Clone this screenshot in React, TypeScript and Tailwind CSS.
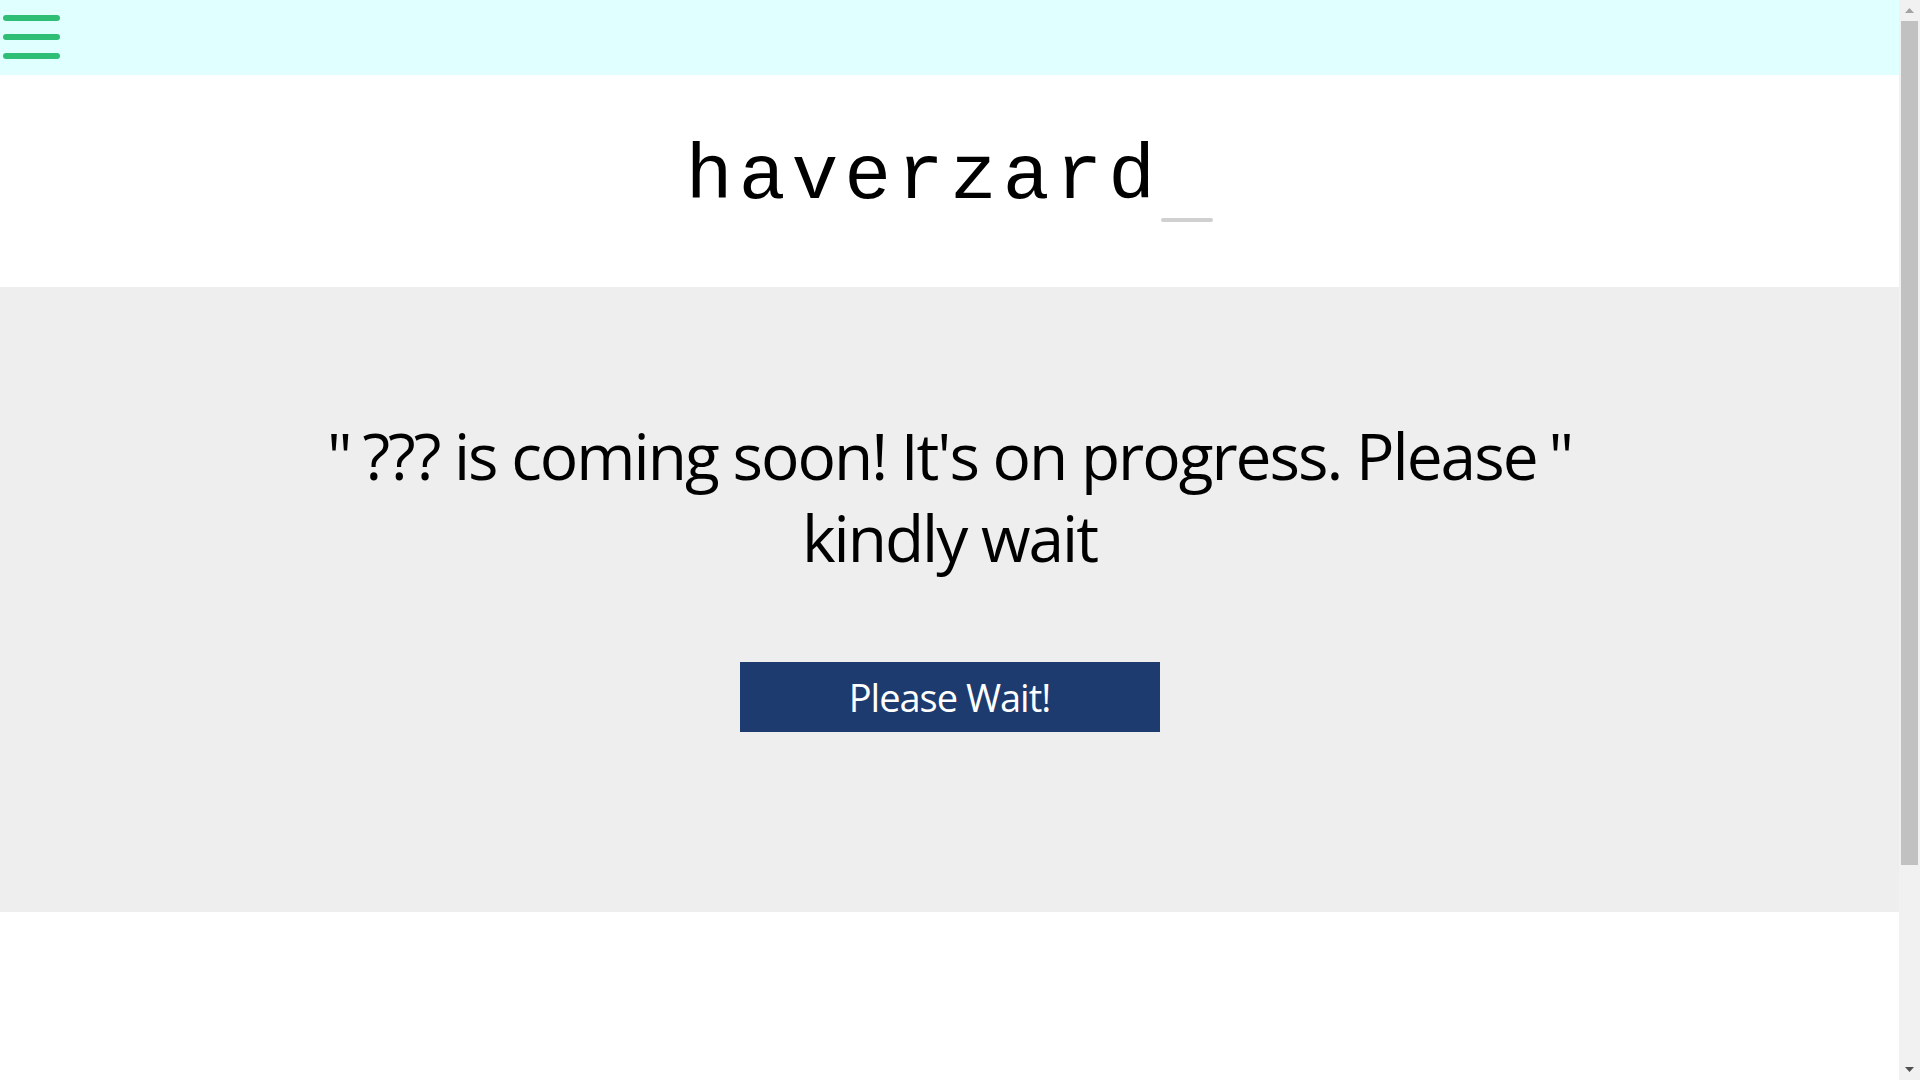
import React from 'react';

const Hamburger: React.FC = () => (
  <button className="flex flex-col gap-[13px] pl-[3px] pt-[15px]" aria-label="menu">
    <span className="block h-[6px] w-[57px] rounded-full bg-[#2fbe76]" />
    <span className="block h-[6px] w-[57px] rounded-full bg-[#2fbe76]" />
    <span className="block h-[6px] w-[57px] rounded-full bg-[#2fbe76]" />
  </button>
);

// window scrollbar as it shows in the shot
const Scrollbar: React.FC = () => (
  <aside className="flex h-full w-[21px] shrink-0 flex-col bg-[#f1f1f1]">
    <div className="flex h-[21px] items-center justify-center">
      <svg width="9" height="5" viewBox="0 0 9 5">
        <polygon points="4.5,0 9,5 0,5" fill="#a3a3a3" />
      </svg>
    </div>
    <div className="mx-[2px] h-[844px] bg-[#c1c1c1]" />
    <div className="flex-1" />
    <div className="flex h-[21px] items-center justify-center">
      <svg width="9" height="5" viewBox="0 0 9 5">
        <polygon points="0,0 9,0 4.5,5" fill="#505050" />
      </svg>
    </div>
  </aside>
);

export default function App() {
  return (
    <div className="flex h-screen overflow-hidden bg-white">
      <main className="min-w-0 flex-1">
        <header className="h-[75px] bg-[#e0ffff]">
          <Hamburger />
        </header>

        <div className="flex h-[212px] items-center justify-center pb-[8px]">
          <h1 className="font-['Liberation_Mono',monospace] text-[78px] leading-none tracking-[6px] text-black">
            haverzard
            <span className="inline-block h-[4px] w-[52px] translate-y-[24px] rounded-full bg-[#d0d0d0] align-baseline" />
          </h1>
        </div>

        <section className="h-[625px] bg-[#eeeeee] pt-[128px]">
          <div className="mx-auto w-[1245px] text-center font-['Open_Sans',sans-serif] text-[64px] leading-[82px] tracking-[-2px] text-black">
            <span className="float-left">"</span>
            <span className="float-right">"</span>
            ??? is coming soon! It's on progress. Please kindly wait
          </div>
          <div className="mt-[83px] flex justify-center">
            <button className="flex h-[70px] w-[420px] items-center justify-center bg-[#1d3b6f] font-['Open_Sans',sans-serif] text-[38px] tracking-[-1px] text-white">
              Please Wait!
            </button>
          </div>
        </section>
      </main>
      <Scrollbar />
    </div>
  );
}
